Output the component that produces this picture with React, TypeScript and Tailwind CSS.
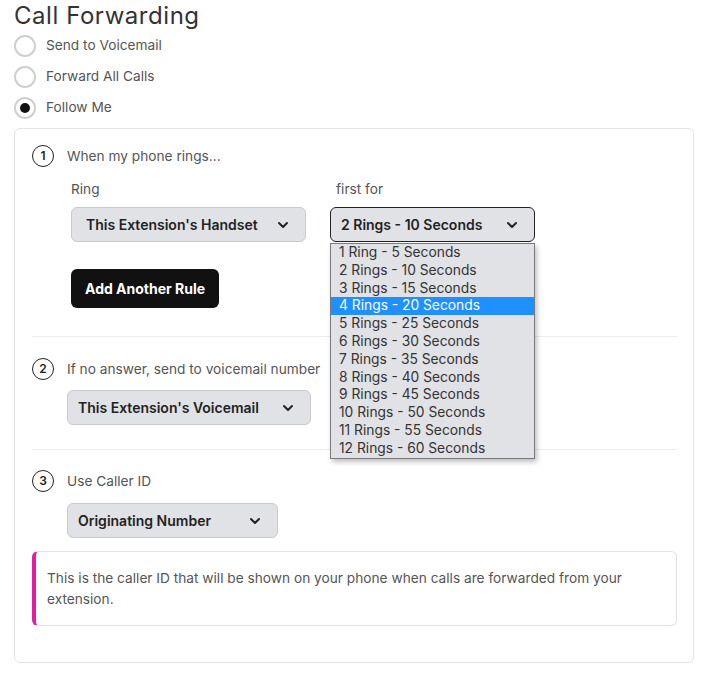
import { useState } from 'react';

const ringOptions = Array.from({ length: 12 }, (_, i) => {
  const n = i + 1;
  return `${n} ${n === 1 ? 'Ring' : 'Rings'} - ${n * 5} Seconds`;
});

function Chevron() {
  return (
    <svg width="12" height="8" viewBox="0 0 12 8" fill="none" className="shrink-0">
      <path d="M2 2l4 4 4-4" stroke="#222" strokeWidth="2" strokeLinecap="round" strokeLinejoin="round" />
    </svg>
  );
}

function Radio({ label, checked }: { label: string; checked?: boolean }) {
  return (
    <label className="flex items-center gap-[10px] h-[31px] cursor-pointer">
      <span className="w-[22px] h-[22px] rounded-full border-2 border-[#cfcfcf] flex items-center justify-center bg-white">
        {checked && <span className="w-[10px] h-[10px] rounded-full bg-[#111]" />}
      </span>
      <span className="text-[13.7px] text-[#555]">{label}</span>
    </label>
  );
}

function StepNumber({ n }: { n: number }) {
  return (
    <span className="w-[22px] h-[22px] rounded-full border-[1.5px] border-[#222] flex items-center justify-center text-[12px] font-semibold text-[#222] shrink-0">
      {n}
    </span>
  );
}

function SelectBox({
  value,
  width,
  focused,
  pad,
}: {
  value: string;
  width: string;
  focused?: boolean;
  pad: string;
}) {
  return (
    <div
      className={`${width} ${pad} h-[35px] rounded-[6px] bg-[#e1e2e6] flex items-center justify-between pr-[16px] ${
        focused ? 'border border-[#222]' : 'border border-[#c9cacd]'
      }`}
    >
      <span className="text-[14px] font-semibold text-[#222]">{value}</span>
      <Chevron />
    </div>
  );
}

export default function App() {
  const [selected] = useState(3);
  return (
    <div className="w-[708px] h-[676px] bg-white px-[14px] pt-[1px] font-['Inter',sans-serif] overflow-hidden">
      <h1 className="text-[24px] leading-[30px] text-[#333] tracking-[0.55px]">Call Forwarding</h1>
      <div className="flex flex-col mt-[-1px]">
        <Radio label="Send to Voicemail" />
        <Radio label="Forward All Calls" />
        <Radio label="Follow Me" checked />
      </div>

      <div className="mt-[5px] border border-[#e3e3e3] rounded-[6px] pt-[16px] pl-[17px] pr-[16px] pb-[36px]">
        {/* step 1 */}
        <div className="flex items-center gap-[13px]">
          <StepNumber n={1} />
          <span className="text-[13.7px] text-[#555]">When my phone rings...</span>
        </div>
        <div className="pl-[39px] mt-[12px] flex gap-[24px]">
          <div>
            <div className="text-[13.7px] leading-[20px] text-[#555]">Ring</div>
            <div className="mt-[8px]">
              <SelectBox value="This Extension's Handset" width="w-[235px]" pad="pl-[14px]" />
            </div>
          </div>
          <div className="relative">
            <div className="text-[13.7px] leading-[20px] text-[#555] pl-[6px]">first for</div>
            <div className="mt-[8px]">
              <SelectBox value="2 Rings - 10 Seconds" width="w-[205px]" pad="pl-[10px]" focused />
            </div>
            <ul className="absolute left-0 top-[64px] w-[205px] bg-[#e1e2e6] border border-[#7a7a7a] shadow-[2px_3px_5px_rgba(0,0,0,0.25)] z-10">
              {ringOptions.map((opt, i) => (
                <li
                  key={opt}
                  className={`h-[17.8px] leading-[17.8px] pl-[8px] text-[13.8px] ${
                    i === selected ? 'bg-[#1e90ff] text-white' : 'text-[#333]'
                  }`}
                >
                  {opt}
                </li>
              ))}
            </ul>
          </div>
        </div>
        <div className="pl-[39px] mt-[27px]">
          <button className="h-[39px] px-[14px] rounded-[6px] bg-[#111] text-white text-[14px] font-bold">
            Add Another Rule
          </button>
        </div>

        <div className="mt-[28px] border-t border-[#ececec]" />

        {/* step 2 */}
        <div className="mt-[21px] flex items-center gap-[13px]">
          <StepNumber n={2} />
          <span className="text-[13.7px] text-[#555]">If no answer, send to voicemail number</span>
        </div>
        <div className="pl-[35px] mt-[10px]">
          <SelectBox value="This Extension's Voicemail" width="w-[244px]" pad="pl-[10px]" />
        </div>

        <div className="mt-[24px] border-t border-[#ececec]" />

        {/* step 3 */}
        <div className="mt-[20px] flex items-center gap-[13px]">
          <StepNumber n={3} />
          <span className="text-[13.7px] text-[#555]">Use Caller ID</span>
        </div>
        <div className="pl-[35px] mt-[11px]">
          <SelectBox value="Originating Number" width="w-[211px]" pad="pl-[10px]" />
        </div>

        <div className="mt-[13px] border border-[#e3e3e3] border-l-[4px] border-l-[#e020a0] rounded-[6px] pl-[11px] pr-[16px] pt-[16px] pb-[15px]">
          <p className="text-[13.7px] leading-[21px] text-[#555]">
            This is the caller ID that will be shown on your phone when calls are forwarded from your extension.
          </p>
        </div>
      </div>
    </div>
  );
}
